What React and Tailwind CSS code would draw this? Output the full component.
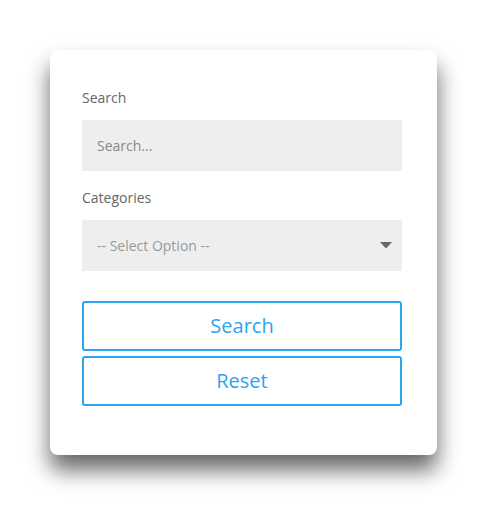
export default function App() {
  return (
    <div
      className="w-[487px] h-[505px] bg-white pt-[50px] pl-[50px]"
      style={{ fontFamily: '"Open Sans", sans-serif' }}
    >
      <div className="w-[387px] h-[405px] bg-white rounded-[8px] shadow-[0_15px_22px_rgba(0,0,0,0.6)] pl-8 pr-[35px] pt-[38px] flex flex-col">
        <label className="text-[14px] leading-[20px] text-[#666]">Search</label>
        <div className="mt-3 h-[51px] bg-[#eeeeee] flex items-center px-[15px] text-[14px] text-[#888]">
          Search...
        </div>
        <label className="mt-[17px] text-[14px] leading-[20px] text-[#666]">Categories</label>
        <div className="mt-3 h-[51px] bg-[#eeeeee] flex items-center justify-between pl-[15px] pr-[10px] text-[14px] text-[#999]">
          <span>-- Select Option --</span>
          <svg width="12" height="7" viewBox="0 0 12 7">
            <path d="M0 0 H12 L6 6.5 Z" fill="#666" />
          </svg>
        </div>
        <button className="mt-[30px] h-[50px] border-2 border-[#2ea3f2] rounded-[3px] text-[20px] text-[#2ea3f2] bg-white">
          Search
        </button>
        <button className="mt-[5px] h-[50px] border-2 border-[#2ea3f2] rounded-[3px] text-[20px] text-[#2ea3f2] bg-white">
          Reset
        </button>
      </div>
    </div>
  );
}
